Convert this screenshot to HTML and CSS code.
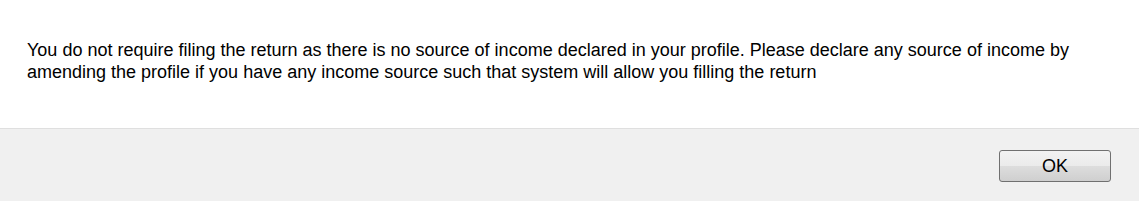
FILE: index.html
```html
<!DOCTYPE html>
<html lang="en">
<head>
    <meta charset="UTF-8">
    <title>Message</title>
    <link rel="stylesheet" href="styles.css">
</head>
<body>
    <div class="dialog">
        <div class="message">
            <p>You do not require filing the return as there is no source of income declared in your profile. Please declare any source of income by amending the profile if you have any income source such that system will allow you filling the return</p>
        </div>
        <div class="footer">
            <button class="btn">OK</button>
        </div>
    </div>
</body>
</html>
```

FILE: styles.css
```css
* {
    margin: 0;
    padding: 0;
    box-sizing: border-box;
}

body {
    background: #ffffff;
    font-family: 'Liberation Sans', Arial, sans-serif;
    color: #000000;
}

.dialog {
    width: 1139px;
    height: 201px;
    display: flex;
    flex-direction: column;
}

.message {
    height: 128px;
    padding: 39px 60px 0 27px;
}

.message p {
    font-size: 18px;
    line-height: 22px;
}

.footer {
    flex: 1;
    background: #f0f0f0;
    border-top: 1px solid #dfdfdf;
    display: flex;
    justify-content: flex-end;
    align-items: flex-start;
    padding: 21px 28px 0 0;
}

.btn {
    width: 112px;
    height: 32px;
    border: 1px solid #707070;
    border-radius: 3px;
    background: linear-gradient(to bottom, #f2f2f2 0%, #ebebeb 50%, #dddddd 51%, #cfcfcf 100%);
    font-family: 'Liberation Sans', Arial, sans-serif;
    font-size: 18px;
    color: #000000;
    cursor: pointer;
}
```
